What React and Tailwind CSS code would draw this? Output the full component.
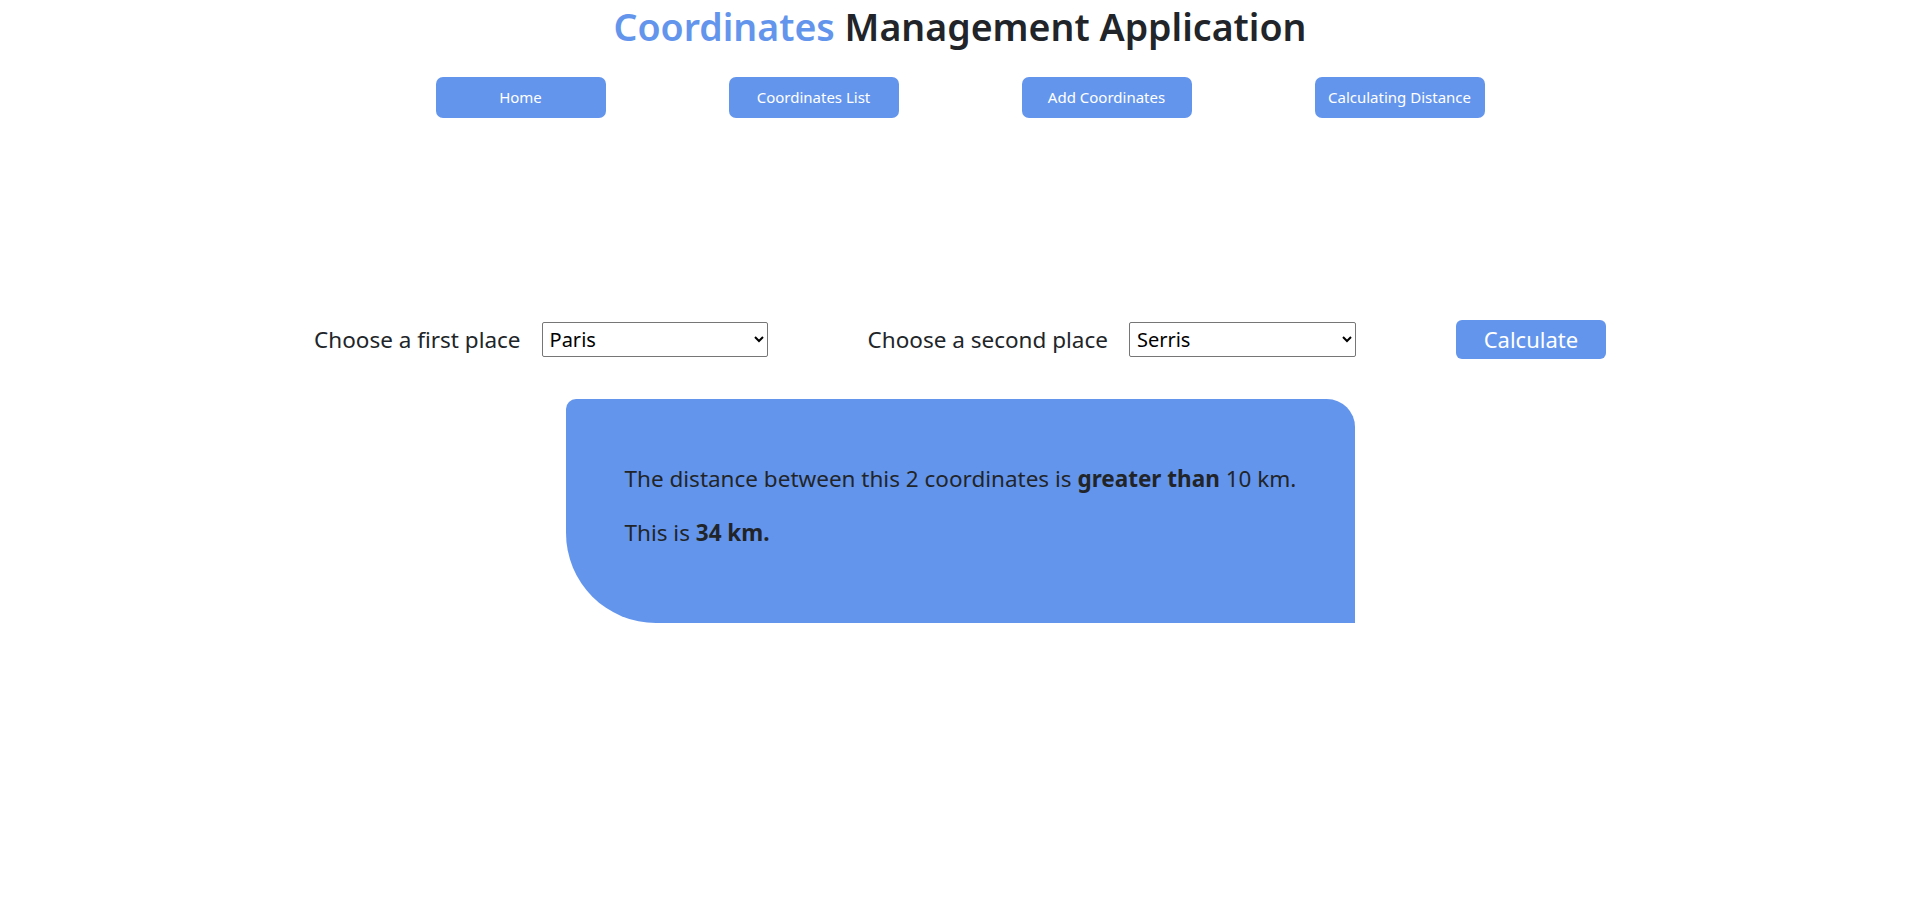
const links = ['Home', 'Coordinates List', 'Add Coordinates', 'Calculating Distance']

function App() {
  return (
    <div className="min-h-screen bg-white text-[#212529] font-['Noto_Sans',sans-serif]">
      <h1 className="pt-[5px] text-center text-[37.5px] leading-[44px] font-semibold">
        <span className="text-[#6495ED]">Coordinates</span> Management Application
      </h1>

      <nav className="mt-[28px] flex justify-center gap-[123px]">
        {links.map((label) => (
          <button
            key={label}
            className="w-[170px] h-[41px] rounded-[7px] bg-[#6495ED] text-white text-[15px]"
          >
            {label}
          </button>
        ))}
      </nav>

      <div className="mt-[202px] flex items-center justify-center h-[39px]">
        <label className="flex items-center gap-[21px] text-[22.5px]">
          Choose a first place
          <select
            defaultValue="Paris"
            className="w-[226px] h-[35px] border border-[#767676] rounded-[2px] bg-white text-black text-[20px] pl-[3px]"
          >
            <option>Paris</option>
            <option>Serris</option>
          </select>
        </label>
        <label className="ml-[100px] flex items-center gap-[21px] text-[22.5px]">
          Choose a second place
          <select
            defaultValue="Serris"
            className="w-[227px] h-[35px] border border-[#767676] rounded-[2px] bg-white text-black text-[20px] pl-[3px]"
          >
            <option>Paris</option>
            <option>Serris</option>
          </select>
        </label>
        <button className="ml-[100px] w-[150px] h-[39px] rounded-[6px] bg-[#6495ED] text-white text-[22px]">
          Calculate
        </button>
      </div>

      <div className="mx-auto mt-[40px] w-[789px] h-[224px] bg-[#6495ED] rounded-tl-[10px] rounded-tr-[28px] rounded-bl-[90px] pt-[64px] pl-[59px] pr-[20px] text-[22.5px]">
        <p className="leading-[32px] whitespace-nowrap">
          The distance between this 2 coordinates is <b>greater than</b> 10 km.
        </p>
        <p className="mt-[22px] leading-[32px]">
          This is <b>34 km.</b>
        </p>
      </div>
    </div>
  )
}

export default App
